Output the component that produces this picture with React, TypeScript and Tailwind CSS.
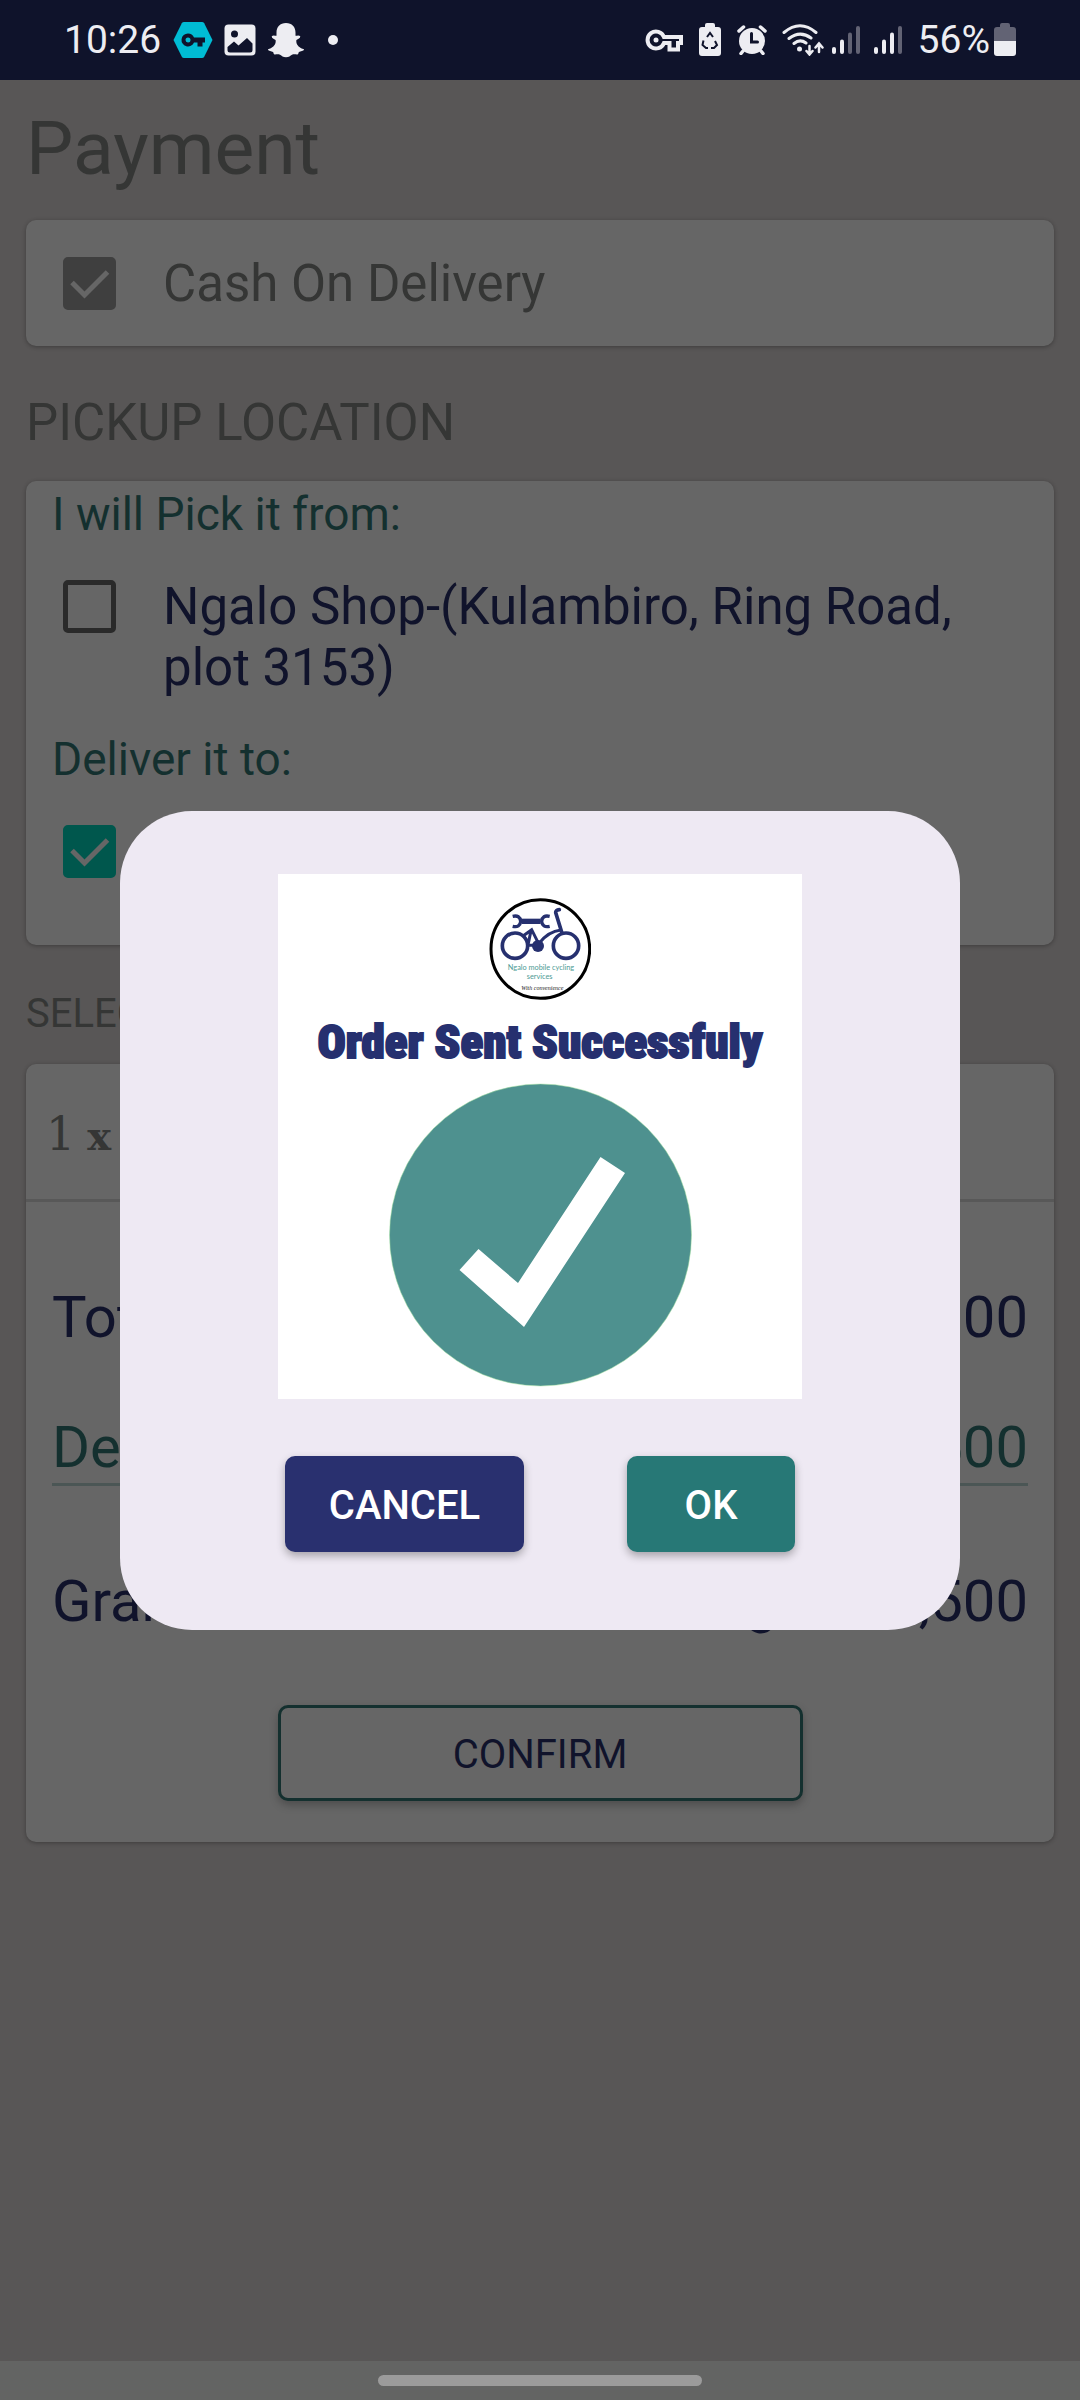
import { useState } from "react";
import type { ReactNode } from "react";

function StatusBar() {
  return (
    <header className="flex h-20 items-center justify-between bg-[#0f132b] pl-16 pr-16 text-[#ededf2]">
      <div className="flex items-center">
        <span className="text-[39px] leading-none">10:26</span>
        <svg className="ml-3 h-9 w-10" viewBox="0 0 40 36" aria-hidden="true">
          <path d="M11 0h18q1.500 0 2.200 1.200L39.500 18l-8.300 16.800Q30.500 36 29 36H11q-1.500 0-2.200-1.200L.5 18 8.800 1.200Q9.500 0 11 0Z" fill="#00bcd4" />
          <path d="M15 11.500a6.500 6.500 0 1 0 6 9h3.500v4h5v-4H32v-5H21a6.500 6.500 0 0 0-6-4Zm0 4a2.500 2.500 0 1 1 0 5 2.500 2.500 0 0 1 0-5Z" fill="#0f132b" fillRule="evenodd" />
        </svg>
        <svg className="ml-[11px] h-8 w-8" viewBox="0 0 32 32" aria-hidden="true">
          <rect x="0.500" y="0.500" width="31" height="31" rx="4" fill="currentColor" />
          <circle cx="10.500" cy="10" r="3.500" fill="#0f132b" />
          <path d="m3.500 23 6.500-5.500 4.500 4L23 14l5.500 5.500V26a2.500 2.500 0 0 1-2.500 2.500H6A2.500 2.500 0 0 1 3.500 26Z" fill="#0f132b" />
        </svg>
        <svg className="ml-3 h-9 w-9" viewBox="0 0 36 36" aria-hidden="true">
          <path
            d="M18 1c6 0 9.500 4 9.500 9.500v3.200c1.600 0 3.400-.8 4.500.4 1 1.600-1.600 2.700-3.600 3.800-.8 5 3.200 8 7.600 9.300.3 1.800-3.500 2-5 2.800-.7.500-.3 2.300-1.500 2.500-1.500.2-3.500-.6-5.500.3-1.800 1-3 2.500-6 2.500s-4.200-1.500-6-2.500c-2-.9-4-.1-5.500-.3-1.200-.2-.8-2-1.500-2.500-1.500-.8-5.300-1-5-2.800 4.400-1.300 8.400-4.300 7.600-9.300-2-1.100-4.600-2.200-3.600-3.800 1.100-1.200 2.900-.4 4.500-.4v-3.200C8.500 5 12 1 18 1Z"
            fill="currentColor"
          />
        </svg>
        <span className="ml-6 size-[10px] rounded-full bg-[#ededf2]" />
      </div>
      <div className="flex items-center">
        <svg className="h-6 w-[38px]" viewBox="0 0 38 24" fill="none" stroke="currentColor" strokeWidth="4" aria-hidden="true">
          <path d="M19 9a8.500 8.500 0 1 0 0 6h5.500v6.500h8.500V15h3V9Z" />
          <circle cx="11" cy="12" r="2.500" fill="currentColor" stroke="none" />
        </svg>
        <svg className="ml-4 h-[34px] w-[22px]" viewBox="0 0 22 34" aria-hidden="true">
          <path d="M6 4V2a2 2 0 0 1 2-2h6a2 2 0 0 1 2 2v2h3a3 3 0 0 1 3 3v23a3 3 0 0 1-3 3H3a3 3 0 0 1-3-3V7a3 3 0 0 1 3-3Z" fill="currentColor" />
          <path d="m8 14 3-4 3 4M16 18l2 4-3 3h-3M4.500 17.500 3.500 22 7 25h2" fill="none" stroke="#0f132b" strokeWidth="2" />
        </svg>
        <svg className="ml-4 h-[30px] w-[30px]" viewBox="0 0 30 30" fill="none" stroke="currentColor" strokeLinecap="round" strokeWidth="3.500" aria-hidden="true">
          <circle cx="15" cy="16" r="13" fill="currentColor" stroke="none" />
          <path d="m2 6 4.500-4M28 6l-4.500-4M6 26l-2 2.500M24 26l2 2.500" />
          <path d="M14.500 8.500V17h6" stroke="#0f132b" strokeWidth="3" />
        </svg>
        <svg className="ml-[15px] h-8 w-[42px]" viewBox="0 0 42 32" fill="none" stroke="currentColor" strokeLinecap="round" strokeWidth="3" aria-hidden="true">
          <path d="M2 8.500Q18-5 34 8.500M7 14.500q11-8.500 22-.5M12 19.500q6-5 12-.5" />
          <circle cx="17.500" cy="25" r="2.500" fill="currentColor" stroke="none" />
          <path d="M27.500 22v8m-3-3 3 3.500 3-3.500M37 28v-8m-3.500 3.500 3.500-4 3.500 4" strokeWidth="2.500" />
        </svg>
        <Signal className="ml-2" bars={2} />
        <Signal className="ml-[14px]" bars={3} />
        <span className="ml-4 text-[39px] leading-none">56%</span>
        <svg className="ml-1 h-[34px] w-[22px]" viewBox="0 0 22 34" aria-hidden="true">
          <path d="M6 4V2a2 2 0 0 1 2-2h6a2 2 0 0 1 2 2v2h3a3 3 0 0 1 3 3v11H0V7a3 3 0 0 1 3-3Z" fill="#626374" />
          <path d="M0 18h22v12a3 3 0 0 1-3 3H3a3 3 0 0 1-3-3Z" fill="currentColor" />
        </svg>
      </div>
    </header>
  );
}

function Signal({ bars, className }: { bars: number; className: string }) {
  const tops = [23, 15.5, 8.5, 2];
  return (
    <svg className={`h-[30px] w-7 ${className}`} viewBox="0 0 28 30" strokeLinecap="round" strokeWidth="4" aria-hidden="true">
      {tops.map((top, i) => (
        <path key={top} d={`M${2 + i * 8} ${top + 1}V27`} stroke={i < bars ? "#ededf2" : "#626374"} />
      ))}
    </svg>
  );
}

type CheckRowProps = {
  id: string;
  label: string;
  defaultChecked?: boolean;
  boxClass: string;
  labelClass: string;
};

function CheckRow({ id, label, defaultChecked, boxClass, labelClass }: CheckRowProps) {
  return (
    <div className="flex items-start pl-[37px] pr-8">
      <span className="relative mt-1 size-[53px] shrink-0">
        <input
          id={id}
          type="checkbox"
          defaultChecked={defaultChecked}
          className={`peer block size-full appearance-none rounded-[5px] border-[5px] ${boxClass}`}
        />
        <svg className="pointer-events-none absolute inset-0 hidden peer-checked:block" viewBox="0 0 53 53" fill="none" aria-hidden="true">
          <path d="m9 25.500 12.500 12.500L44.500 15" stroke="#666666" strokeWidth="5" />
        </svg>
      </span>
      <label htmlFor={id} className={`ml-[47px] text-[51px] leading-[61px] ${labelClass}`}>
        {label}
      </label>
    </div>
  );
}

function Card({ className, children }: { className: string; children: ReactNode }) {
  return (
    <section className={`rounded-[10px] bg-[#666666] shadow-[0_1px_4px_rgba(0,0,0,0.3)] ${className}`}>
      {children}
    </section>
  );
}

function BikeLogo() {
  return (
    <svg className="h-[102px] w-[102px]" viewBox="88 54 306 306" role="img" aria-label="Ngalo mobile cycling services">
      <circle cx="242" cy="207" r="148" fill="#fff" stroke="#000" strokeWidth="9" />
      <g fill="none" stroke="#26306f" strokeWidth="11">
        <circle cx="166" cy="197" r="38" />
        <circle cx="319" cy="197" r="38" />
        <path d="M306 156 288 98q-1-8 11-9" strokeLinecap="round" />
        <path d="M238 190q28-36 66-40M205 196h30M190 168l26-19 22 44M214 152l-8 38" strokeWidth="9" />
        <path d="M159 109q22-5 24 15-2 20-24 15M270 109q-22-5-24 15 2 20 24 15" strokeWidth="10" />
        <path d="M186 124h57" strokeWidth="16" />
      </g>
      <circle cx="235" cy="198" r="18" fill="#26306f" />
      <text x="244" y="270" textAnchor="middle" fill="#4c9a94" className="font-['Lato'] text-[22px]">
        Ngalo mobile cycling
      </text>
      <text x="240" y="298" textAnchor="middle" fill="#4c9a94" className="font-['Lato'] text-[22px]">
        services
      </text>
      <text x="248" y="329" textAnchor="middle" fill="#222" className="font-['Liberation_Serif'] text-[18px] italic">
        With convenience
      </text>
    </svg>
  );
}

function OrderSentDialog() {
  return (
    <div className="absolute inset-0 flex items-center justify-center">
      <div role="dialog" aria-modal="true" aria-labelledby="order-sent" className="flex w-[840px] flex-col items-center rounded-[72px] bg-[#eee9f3] pb-[78px] pt-[63px]">
        <div className="flex w-[524px] flex-col items-center bg-white pb-3 pt-6">
          <BikeLogo />
          <h2 id="order-sent" className="mt-3 whitespace-nowrap font-['Roboto_Condensed','Roboto',sans-serif] text-[47px] font-black leading-[60px] text-[#26306f] [-webkit-text-stroke:2px_#26306f]">
            Order Sent Successfuly
          </h2>
          <svg className="mt-[11px] size-[304px]" viewBox="0 0 304 304" role="img" aria-label="Success">
            <circle cx="152.500" cy="152" r="151" fill="#4e918f" stroke="#a5e2a0" strokeWidth="0.500" />
            <path d="m212.500 74 24.500 16L136 244 71.500 187l19-21 39.500 34Z" fill="#fff" />
          </svg>
        </div>
        <div className="mt-[57px] flex gap-[103px] text-[40px] font-medium text-white">
          <button type="button" className="h-24 w-[239px] rounded-[10px] bg-[#29306f] pt-1 shadow-[0_4px_8px_rgba(0,0,0,0.3)]">
            CANCEL
          </button>
          <button type="button" className="h-24 w-[168px] rounded-[10px] bg-[#277876] pt-1 shadow-[0_4px_8px_rgba(0,0,0,0.3)]">
            OK
          </button>
        </div>
      </div>
    </div>
  );
}

function SummaryRow({ label, value, className }: { label: string; value: string; className: string }) {
  return (
    <div className={`flex justify-between text-[58px] leading-[68px] ${className}`}>
      <span>{label}</span>
      <span>{value}</span>
    </div>
  );
}

export default function App() {
  const [confirmed, setConfirmed] = useState(true);
  return (
    <div className="flex min-h-screen flex-col bg-[#585656] font-[Roboto,sans-serif]">
      <StatusBar />
      <main className="relative flex-1 px-[26px] pt-6 text-[#353635]">
        <h1 className="text-[75px] leading-[88px]">Payment</h1>
        <Card className="mt-7 pb-8 pt-[33px]">
          <CheckRow
            id="cash"
            label="Cash On Delivery"
            defaultChecked
            boxClass="border-[#3f3f3f] bg-[#3f3f3f]"
            labelClass="text-[#353635]"
          />
        </Card>

        <h2 className="mt-[46px] text-[51px] leading-[61px]">PICKUP LOCATION</h2>
        <Card className="mt-7 pb-[63px] pt-[6px]">
          <p className="pl-[26px] text-[46px] leading-[54px] text-[#14302f]">I will Pick it from:</p>
          <div className="mt-[35px]">
            <CheckRow
              id="pickup"
              label="Ngalo Shop-(Kulambiro, Ring Road, plot 3153)"
              boxClass="border-[#2a2a2a] checked:bg-[#2a2a2a]"
              labelClass="text-[#10132b]"
            />
          </div>
          <p className="mt-[34px] pl-[26px] text-[46px] leading-[54px] text-[#14302f]">Deliver it to:</p>
          <div className="mt-[35px]">
            <CheckRow
              id="deliver"
              label="Home"
              defaultChecked
              boxClass="border-[#00574d] bg-[#00574d]"
              labelClass="text-[#10132b]"
            />
          </div>
        </Card>

        <h2 className="mt-[45px] text-[40px] leading-[48px]">SELECTED ITEMS</h2>
        <Card className="mt-[26px] pb-[41px]">
          <div className="flex h-[138px] items-baseline gap-3 border-b-[3px] border-[#585858] pl-5 pt-[36px] font-['DejaVu_Serif',serif] text-[40px]">
            <span className="text-[46px]">1</span>
            <span className="font-bold">x</span>
          </div>
          <div className="px-[26px] pt-[81px]">
            <SummaryRow label="Total" value="Ugx 120,000" className="text-[#10132b]" />
            <SummaryRow label="Delivery" value="Ugx 3,500" className="mt-[62px] border-b-[3px] border-[#4b5655] pb-[2px] text-[#14302f]" />
            <SummaryRow label="Grand Total" value="Ugx 123,500" className="mt-[81px] text-[#10132b]" />
          </div>
          <button
            type="button"
            onClick={() => setConfirmed(true)}
            className="mx-auto mt-[70px] block h-24 w-[525px] rounded-[10px] border-[3px] border-[#14302f] bg-[#666666] pt-1 text-[40px] text-[#10132b] shadow-[0_4px_8px_rgba(0,0,0,0.25)]"
          >
            CONFIRM
          </button>
        </Card>
        {confirmed && <OrderSentDialog />}
      </main>
      <footer className="flex justify-center bg-[#636463] pb-[14px] pt-[14px]">
        <span className="h-[11px] w-[324px] rounded-full bg-[#9b9b9b]" />
      </footer>
    </div>
  );
}
